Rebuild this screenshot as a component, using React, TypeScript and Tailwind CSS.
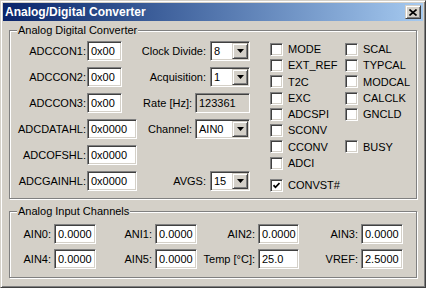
import React from "react";

const FONT = "font-['Liberation_Sans',Arial,sans-serif]";

const sunken =
  "border border-t-[#808080] border-l-[#808080] border-b-white border-r-white shadow-[inset_1px_1px_0_#404040,inset_-1px_-1px_0_#d4d0c8]";
const raised =
  "border border-t-[#d4d0c8] border-l-[#d4d0c8] border-b-[#404040] border-r-[#404040] shadow-[inset_1px_1px_0_#fff,inset_-1px_-1px_0_#808080]";

function Edit({ value, className = "", gray = false }: { value: string; className?: string; gray?: boolean }) {
  return (
    <div className={`flex h-[20px] shrink-0 items-center pl-[3px] ${sunken} ${gray ? "bg-[#d4d0c8]" : "bg-white"} ${className}`}>
      {value}
    </div>
  );
}

function Combo({ value, className = "" }: { value: string; className?: string }) {
  return (
    <div className={`flex h-[20px] shrink-0 p-[1px] bg-white ${sunken} ${className}`}>
      <span className="flex flex-1 items-center pl-[2px]">{value}</span>
      <span className={`flex w-[16px] items-center justify-center bg-[#d4d0c8] ${raised}`}>
        <svg width="7" height="4" viewBox="0 0 7 4">
          <path d="M0 0h7L3.5 4z" fill="#000" />
        </svg>
      </span>
    </div>
  );
}

// right-aligned label + control, used in the middle column and bottom group
function Field({ label, children }: { label: string; children: React.ReactNode }) {
  return (
    <div className="flex h-[20px] items-center justify-end gap-[3px]">
      <span className="whitespace-nowrap text-right">{label}</span>
      {children}
    </div>
  );
}

// register rows on the left: fixed label column
function RegRow({ label, value, wide = false }: { label: string; value: string; wide?: boolean }) {
  return (
    <div className="flex h-[20px] items-center gap-[1px]">
      <span className="w-[76px] whitespace-nowrap text-right">{label}</span>
      <Edit value={value} className={wide ? "w-[50px]" : "w-[35px]"} />
    </div>
  );
}

function Check({ label, checked = false }: { label?: string; checked?: boolean }) {
  return (
    <div className="flex h-[16.3px] items-center gap-[5px]">
      {label !== undefined && (
        <span className={`flex h-[13px] w-[13px] items-center justify-center bg-white ${sunken}`}>
          {checked && (
            <svg width="7" height="7" viewBox="0 0 7 7">
              <path d="M0.5 3.2 L2.5 5.3 L6.5 1" fill="none" stroke="#000" strokeWidth="1.7" />
            </svg>
          )}
        </span>
      )}
      <span>{label}</span>
    </div>
  );
}

function Group({ title, className, children }: { title: string; className: string; children: React.ReactNode }) {
  return (
    <div className={`relative mx-[6px] border border-[#808080] shadow-[inset_1px_1px_0_#fff,1px_1px_0_#fff] ${className}`}>
      <span className="absolute -top-[7px] left-[7px] bg-[#d4d0c8] px-[1px] leading-[13px]">{title}</span>
      {children}
    </div>
  );
}

const checksA = ["MODE", "EXT_REF", "T2C", "EXC", "ADCSPI", "SCONV", "CCONV", "ADCI"];
const checksB = ["SCAL", "TYPCAL", "MODCAL", "CALCLK", "GNCLD", undefined, "BUSY"];

export default function App() {
  return (
    <div
      className={`flex h-[288px] w-[426px] flex-col bg-[#d4d0c8] p-[2px] text-[11px] text-black ${FONT} ${raised}`}
    >
      {/* Title bar */}
      <div className="flex h-[18px] shrink-0 items-center justify-between bg-gradient-to-r from-[#0a246a] to-[#a6caf0] pl-[2px] pr-[2px]">
        <span className="text-[12px] font-bold text-white">Analog/Digital Converter</span>
        <span className={`flex h-[14px] w-[16px] items-center justify-center bg-[#d4d0c8] ${raised}`}>
          <svg width="8" height="7" viewBox="0 0 8 7">
            <path d="M0.5 0.5 L7.5 6.5 M7.5 0.5 L0.5 6.5" stroke="#000" strokeWidth="1.6" />
          </svg>
        </span>
      </div>

      <Group title="Analog Digital Converter" className="mt-[9px] h-[169px]">
        <div className="flex pt-[10px]">
          {/* left column */}
          <div className="flex w-[130px] flex-col gap-[6px]">
            <RegRow label="ADCCON1:" value="0x00" />
            <RegRow label="ADCCON2:" value="0x00" />
            <RegRow label="ADCCON3:" value="0x00" />
            <RegRow label="ADCDATAHL:" value="0x0000" wide />
            <RegRow label="ADCOFSHL:" value="0x0000" wide />
            <RegRow label="ADCGAINHL:" value="0x0000" wide />
          </div>

          {/* middle column */}
          <div className="flex w-[110px] flex-col gap-[6px]">
            <Field label="Clock Divide:"><Combo value="8" className="w-[40px] ml-[1px]" /></Field>
            <Field label="Acquisition:"><Combo value="1" className="w-[40px] ml-[1px]" /></Field>
            <Field label="Rate [Hz]:"><Edit value="123361" gray className="w-[55px]" /></Field>
            <Field label="Channel:"><Combo value="AIN0" className="w-[55px]" /></Field>
            <div className="h-[20px]" />
            <Field label="AVGS:"><Combo value="15" className="w-[40px] ml-[1px]" /></Field>
          </div>

          {/* checkboxes */}
          <div className="ml-[20px] flex flex-col">
            <div className="flex">
              <div className="flex w-[75px] flex-col">
                {checksA.map((c) => (
                  <Check key={c} label={c} />
                ))}
              </div>
              <div className="flex flex-col">
                {checksB.map((c, i) => (
                  <Check key={i} label={c} />
                ))}
              </div>
            </div>
            <div className="mt-[6px]">
              <Check label="CONVST#" checked />
            </div>
          </div>
        </div>
      </Group>

      <Group title="Analog Input Channels" className="mt-[12px] h-[67px]">
        <div className="grid grid-cols-[86px_101px_102px_104px] gap-y-[5px] pt-[12px]">
          <Field label="AIN0:"><Edit value="0.0000" className="w-[42px]" /></Field>
          <Field label="ANI1:"><Edit value="0.0000" className="w-[42px]" /></Field>
          <Field label="AIN2:"><Edit value="0.0000" className="w-[41px]" /></Field>
          <Field label="AIN3:"><Edit value="0.0000" className="w-[42px]" /></Field>
          <Field label="AIN4:"><Edit value="0.0000" className="w-[42px]" /></Field>
          <Field label="AIN5:"><Edit value="0.0000" className="w-[42px]" /></Field>
          <Field label="Temp [°C]:"><Edit value="25.0" className="w-[41px]" /></Field>
          <Field label="VREF:"><Edit value="2.5000" className="w-[42px]" /></Field>
        </div>
      </Group>
    </div>
  );
}
